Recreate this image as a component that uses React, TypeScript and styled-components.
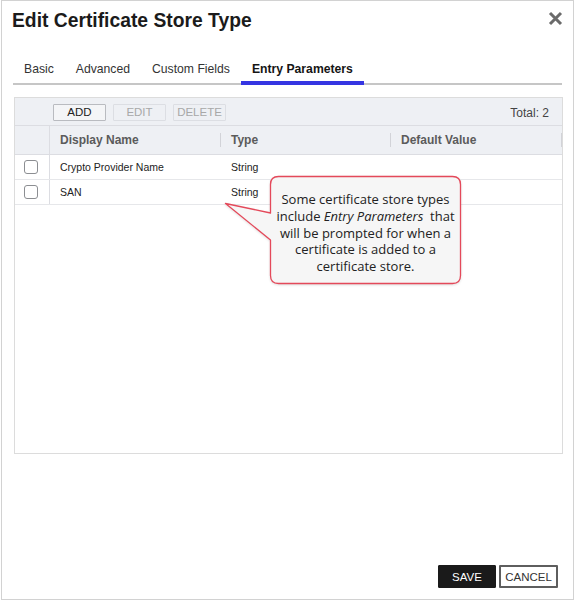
import React from "react";
import styled, { createGlobalStyle } from "styled-components";

const Global = createGlobalStyle`
  html, body { margin: 0; padding: 0; background: #ffffff; }
  body { font-family: "Liberation Sans", Arial, sans-serif; color: #222; }
  * { box-sizing: border-box; }
`;

const Dialog = styled.div`
  position: relative;
  margin-left: 1px;
  width: 573px;
  height: 600px;
  border: 1px solid #d2d2d2;
  background: #fff;
  display: flex;
  flex-direction: column;
`;

const Header = styled.div`
  height: 61px;
  padding: 9px 10px 0 10px;
  display: flex;
  justify-content: space-between;
  align-items: flex-start;
`;

const Title = styled.h1`
  margin: 0;
  font-size: 19.3px;
  line-height: 22px;
  font-weight: 700;
  color: #1b1b1b;
`;

const CloseButton = styled.button`
  border: 0;
  padding: 0;
  margin-top: 1px;
  background: transparent;
  width: 15px;
  height: 15px;
  display: flex;
  cursor: pointer;
`;

const TabBar = styled.div`
  display: flex;
  margin: 0 11px 0 11px;
  border-bottom: 2px solid #c6c6c6;
`;

const Tab = styled.div<{ $active?: boolean }>`
  padding: 0 11px 5px;
  font-size: 12.2px;
  line-height: 14px;
  color: ${(p) => (p.$active ? "#151515" : "#333")};
  font-weight: ${(p) => (p.$active ? 700 : 400)};
  border-bottom: 4px solid ${(p) => (p.$active ? "#3535e2" : "transparent")};
  margin-bottom: -2px;
  white-space: nowrap;
`;

const Grid = styled.div`
  margin: 12px 10px 0 12px;
  height: 357px;
  border: 1px solid #dcdcdc;
  display: flex;
  flex-direction: column;
`;

const Toolbar = styled.div`
  height: 28px;
  background: #eef0f4;
  border-bottom: 1px solid #dcdde2;
  display: flex;
  align-items: flex-start;
  padding: 6px 13px 0 38px;
  gap: 7px;
`;

const ToolButton = styled.button<{ $disabled?: boolean }>`
  width: 53px;
  height: 17px;
  padding: 0;
  font-family: "Liberation Sans", Arial, sans-serif;
  font-size: 11.5px;
  line-height: 15px;
  background: ${(p) => (p.$disabled ? "#eef0f4" : "#f4f5f7")};
  border: 1px solid ${(p) => (p.$disabled ? "#dcdee3" : "#b9bbc0")};
  color: ${(p) => (p.$disabled ? "#a8a8a8" : "#222")};
  border-radius: 1px;
`;

const Total = styled.div`
  margin-left: auto;
  margin-top: 2px;
  font-size: 12px;
  line-height: 14px;
  color: #444;
`;

const Row = styled.div<{ $head?: boolean }>`
  display: grid;
  grid-template-columns: 35px 171px 170px 1fr;
  height: ${(p) => (p.$head ? "29px" : "25px")};
  background: ${(p) => (p.$head ? "#eef0f4" : "#fff")};
  border-bottom: 1px solid ${(p) => (p.$head ? "#dcdde2" : "#e6e7ea")};
`;

const CheckCell = styled.div`
  border-right: 1px solid #dcdde2;
  display: flex;
  align-items: center;
  padding-left: 9px;
`;

const Cell = styled.div<{ $head?: boolean }>`
  position: relative;
  display: flex;
  align-items: center;
  padding-left: 10px;
  font-size: ${(p) => (p.$head ? "12px" : "10.5px")};
  font-weight: ${(p) => (p.$head ? 700 : 400)};
  color: ${(p) => (p.$head ? "#5b5b5b" : "#222")};
  ${(p) =>
    p.$head
      ? `&::after {
    content: "";
    position: absolute;
    right: 0;
    top: 7px;
    width: 1px;
    height: 14px;
    background: #d2d3d8;
  }`
      : ""}
`;

const Checkbox = styled.span`
  width: 14px;
  height: 14px;
  border: 1.5px solid #8c8e92;
  border-radius: 3px;
  background: #fff;
`;

const Footer = styled.div`
  margin-top: auto;
  display: flex;
  justify-content: flex-end;
  gap: 3px;
  padding: 0 15px 11px 0;
`;

const FooterButton = styled.button<{ $primary?: boolean }>`
  height: 23px;
  width: ${(p) => (p.$primary ? "58px" : "59px")};
  padding: 0;
  font-family: "Liberation Sans", Arial, sans-serif;
  font-size: 11.5px;
  background: ${(p) => (p.$primary ? "#1a1a1a" : "#fff")};
  color: ${(p) => (p.$primary ? "#fff" : "#333")};
  border: ${(p) => (p.$primary ? "1px solid #1a1a1a" : "2px solid #5e5e5e")};
  border-radius: 1px;
`;

const CalloutShape = styled.svg`
  position: absolute;
  left: 222px;
  top: 173px;
  overflow: visible;
  filter: drop-shadow(0 1px 1px rgba(0, 0, 0, 0.12));
`;

const CalloutText = styled.div`
  position: absolute;
  left: 268px;
  top: 175px;
  width: 191px;
  height: 108px;
  padding-top: 6px;
  display: flex;
  align-items: center;
  justify-content: center;
  text-align: center;
  font-family: "Open Sans", "Liberation Sans", sans-serif;
  font-size: 13px;
  line-height: 16.7px;
  color: #222;
`;

const rows = [
  { name: "Crypto Provider Name", type: "String" },
  { name: "SAN", type: "String" },
];

export default function App() {
  return (
    <>
      <Global />
      <Dialog>
        <Header>
          <Title>Edit Certificate Store Type</Title>
          <CloseButton aria-label="Close">
            <svg width="15" height="15" viewBox="0 0 15 15">
              <path
                d="M2 2 L13 13 M13 2 L2 13"
                stroke="#6a6a6a"
                strokeWidth="3"
                strokeLinecap="butt"
              />
            </svg>
          </CloseButton>
        </Header>
        <TabBar>
          <Tab>Basic</Tab>
          <Tab>Advanced</Tab>
          <Tab>Custom Fields</Tab>
          <Tab $active>Entry Parameters</Tab>
        </TabBar>
        <Grid>
          <Toolbar>
            <ToolButton>ADD</ToolButton>
            <ToolButton $disabled>EDIT</ToolButton>
            <ToolButton $disabled>DELETE</ToolButton>
            <Total>Total: 2</Total>
          </Toolbar>
          <Row $head>
            <CheckCell />
            <Cell $head>Display Name</Cell>
            <Cell $head>Type</Cell>
            <Cell $head>Default Value</Cell>
          </Row>
          {rows.map((r) => (
            <Row key={r.name}>
              <CheckCell>
                <Checkbox />
              </CheckCell>
              <Cell>{r.name}</Cell>
              <Cell>{r.type}</Cell>
              <Cell />
            </Row>
          ))}
        </Grid>
        <Footer>
          <FooterButton $primary>SAVE</FooterButton>
          <FooterButton>CANCEL</FooterButton>
        </Footer>
        <CalloutShape width="240" height="112" viewBox="0 0 240 112">
          <path
            d="M54.5 2.5 H228.5 Q236.5 2.5 236.5 10.5 V101.5 Q236.5 109.5 228.5 109.5 H54.5 Q46.5 109.5 46.5 101.5 V66 L1.5 29.5 L46.5 39 V10.5 Q46.5 2.5 54.5 2.5 Z"
            fill="#f6f6f6"
            stroke="#e4495a"
            strokeWidth="1.3"
            strokeLinejoin="round"
          />
        </CalloutShape>
        <CalloutText>
          <div>
            Some certificate store types
            <br />
            include <em>Entry Parameters</em>&nbsp; that
            <br />
            will be prompted for when a
            <br />
            certificate is added to a
            <br />
            certificate store.
          </div>
        </CalloutText>
      </Dialog>
    </>
  );
}
